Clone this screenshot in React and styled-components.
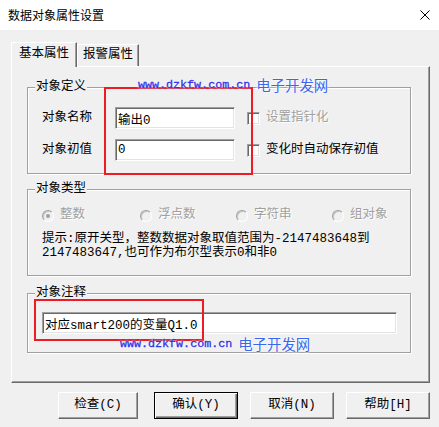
import React from 'react';
import styled, { createGlobalStyle } from 'styled-components';

const Global = createGlobalStyle`
  html, body { margin: 0; padding: 0; background: #f0f0f0; }
  #root { width: 439px; height: 427px; }
`;

const UI = `"Liberation Mono", "Noto Sans CJK SC", monospace`;

const Window = styled.div`
  position: relative;
  width: 439px;
  height: 427px;
  background: #f0f0f0;
  font-family: ${UI};
  font-size: 12.5px;
  color: #000;
  overflow: hidden;
`;

const TitleBar = styled.div`
  height: 30px;
  background: #fff;
  display: flex;
  align-items: center;
  justify-content: space-between;
  padding: 0 9px 0 8px;
  box-sizing: border-box;
`;

const Title = styled.div`
  font-family: "Noto Sans CJK SC", sans-serif;
  font-size: 12px;
  line-height: 14px;
`;

const CloseIcon = styled.svg`
  width: 10px;
  height: 10px;
  margin-top: -1px;
`;

const Body = styled.div`
  padding: 12px 9px 0 11px;
`;

const Tabs = styled.div`
  display: flex;
  align-items: flex-end;
  height: 24px;
  position: relative;
  z-index: 1;
`;

const Tab = styled.div`
  box-sizing: border-box;
  width: ${p => p.$w}px;
  height: ${p => (p.$active ? 25 : 22)}px;
  margin-bottom: ${p => (p.$active ? -1 : 0)}px;
  background: #f0f0f0;
  border-left: 1px solid #fff;
  border-top: 1px solid #fff;
  border-right: 1px solid #696969;
  box-shadow: inset -1px 0 0 #a0a0a0;
  display: flex;
  align-items: center;
  justify-content: center;
  padding-bottom: ${p => (p.$active ? 2 : 0)}px;
  line-height: 15px;
`;

const Panel = styled.div`
  box-sizing: border-box;
  height: 317px;
  border: 1px solid;
  border-color: #fff #696969 #696969 #fff;
  box-shadow: inset -1px -1px 0 #a0a0a0;
  padding: 20px 18px 0 15px;
  display: flex;
  flex-direction: column;
`;

const Group = styled.div`
  position: relative;
  border: 1px solid #a0a0a0;
  box-shadow: 1px 1px 0 #fff, inset 1px 1px 0 #fff;
  margin-top: ${p => p.$mt || 0}px;
  padding: ${p => p.$pad};
`;

const Legend = styled.div`
  position: absolute;
  top: -8px;
  left: 7px;
  padding: 0 1px;
  background: #f0f0f0;
  line-height: 15px;
`;

const FieldRow = styled.div`
  display: flex;
  align-items: center;
  height: 22px;
  & + & { margin-top: 10px; }
`;

const FieldLabel = styled.div`
  width: 73px;
  line-height: 15px;
`;

const TextInput = styled.input`
  box-sizing: border-box;
  width: ${p => p.$w}px;
  height: 22px;
  margin: 0;
  padding: 0 2px;
  font: inherit;
  color: #000;
  background: #fff;
  border: 1px solid;
  border-color: #a0a0a0 #fff #fff #a0a0a0;
  box-shadow: inset 1px 1px 0 #696969, inset -1px -1px 0 #e3e3e3;
  outline: none;
`;

const CheckBox = styled.span`
  box-sizing: border-box;
  width: 13px;
  height: 13px;
  margin-left: 12px;
  background: #fff;
  border: 1px solid;
  border-color: #a0a0a0 #fff #fff #a0a0a0;
  box-shadow: inset 1px 1px 0 #696969, inset -1px -1px 0 #e3e3e3;
`;

const OptionText = styled.span`
  margin-left: ${p => p.$ml || 0}px;
  line-height: 15px;
  color: ${p => (p.$disabled ? '#a0a0a0' : '#000')};
  text-shadow: ${p => (p.$disabled ? '1px 1px 0 #fff' : 'none')};
`;

const RadioRow = styled.div`
  display: grid;
  grid-template-columns: 98px 96px 96px auto;
  height: 14px;
  align-items: center;
`;

const Radio = styled.div`
  display: flex;
  align-items: center;
  gap: 6px;
`;

const RadioDot = styled.span`
  box-sizing: border-box;
  width: 12px;
  height: 12px;
  border-radius: 50%;
  border: 1px solid;
  border-color: #a0a0a0 #fff #fff #a0a0a0;
  background: #f0f0f0;
  box-shadow: inset 1px 1px 0 #c8c8c8;
  display: flex;
  align-items: center;
  justify-content: center;
  &::after {
    content: '';
    width: 4px;
    height: 4px;
    border-radius: 50%;
    background: ${p => (p.$checked ? '#a0a0a0' : 'transparent')};
  }
`;

const Hint = styled.div`
  margin-top: 10px;
  line-height: 14px;
  white-space: pre;
`;

const ButtonRow = styled.div`
  display: flex;
  gap: 12px;
  padding-left: 47px;
  margin-top: 9px;
`;

const Button = styled.button`
  box-sizing: border-box;
  width: ${p => p.$w}px;
  height: 27px;
  margin: 0 ${p => p.$mr || 0}px 0 0;
  padding: 0;
  font: inherit;
  color: #000;
  background: #f0f0f0;
  border: 1px solid;
  border-color: ${p => (p.$default ? '#000' : '#fff #696969 #696969 #fff')};
  box-shadow: ${p =>
    p.$default
      ? 'inset 1px 1px 0 #fff, inset -1px -1px 0 #696969, inset -2px -2px 0 #a0a0a0'
      : 'inset -1px -1px 0 #a0a0a0'};
  line-height: 15px;
`;

const RedBox = styled.div`
  position: absolute;
  left: ${p => p.$x}px;
  top: ${p => p.$y}px;
  width: ${p => p.$w}px;
  height: ${p => p.$h}px;
  box-sizing: border-box;
  border: 2px solid #ed1c24;
  pointer-events: none;
`;

const Watermark = styled.div`
  position: absolute;
  left: ${p => p.$x}px;
  top: ${p => p.$y}px;
  display: flex;
  align-items: center;
  gap: 6px;
  height: 16px;
  pointer-events: none;
`;

const WmUrl = styled.span`
  font-family: "Liberation Mono", monospace;
  font-size: 11.7px;
  line-height: 14px;
  color: #2f2fe6;
  -webkit-text-stroke: 0.3px #2f2fe6;
  text-shadow: 0 0 2px #fff, 0 0 2px #fff;
`;

const WmName = styled.span`
  font-family: "Noto Sans CJK SC", sans-serif;
  font-size: 14.4px;
  line-height: 16px;
  color: #3a66f0;
  text-shadow: 0 0 2px #fff, 0 0 3px #fff;
`;

function Mark({ x, y }) {
  return (
    <Watermark $x={x} $y={y}>
      <WmUrl>www.dzkfw.com.cn</WmUrl>
      <WmName>电子开发网</WmName>
    </Watermark>
  );
}

export default function App() {
  return (
    <>
      <Global />
      <Window>
        <TitleBar>
          <Title>数据对象属性设置</Title>
          <CloseIcon viewBox="0 0 10 10">
            <path d="M0.5 0.5 L9.5 9.5 M9.5 0.5 L0.5 9.5" stroke="#000" strokeWidth="1" fill="none" />
          </CloseIcon>
        </TitleBar>
        <Body>
          <Tabs>
            <Tab $active $w={66}>基本属性</Tab>
            <Tab $w={62}>报警属性</Tab>
          </Tabs>
          <Panel>
            <Group $pad="19px 0 12px 14px">
              <Legend>对象定义</Legend>
              <FieldRow>
                <FieldLabel>对象名称</FieldLabel>
                <TextInput $w={120} defaultValue="输出0" readOnly />
                <CheckBox />
                <OptionText $ml={6} $disabled>设置指针化</OptionText>
              </FieldRow>
              <FieldRow>
                <FieldLabel>对象初值</FieldLabel>
                <TextInput $w={120} defaultValue="0" readOnly />
                <CheckBox />
                <OptionText $ml={6}>变化时自动保存初值</OptionText>
              </FieldRow>
            </Group>
            <Group $mt={15} $pad="18px 0 15px 14px">
              <Legend>对象类型</Legend>
              <RadioRow>
                <Radio><RadioDot $checked /><OptionText $disabled>整数</OptionText></Radio>
                <Radio><RadioDot /><OptionText $disabled>浮点数</OptionText></Radio>
                <Radio><RadioDot /><OptionText $disabled>字符串</OptionText></Radio>
                <Radio><RadioDot /><OptionText $disabled>组对象</OptionText></Radio>
              </RadioRow>
              <Hint>{'提示:原开关型，整数数据对象取值范围为-2147483648到\n2147483647,也可作为布尔型表示0和非0'}</Hint>
            </Group>
            <Group $mt={17} $pad="18px 0 18px 14px">
              <Legend>对象注释</Legend>
              <TextInput $w={355} defaultValue="对应smart200的变量Q1.0" readOnly />
            </Group>
          </Panel>
          <ButtonRow>
            <Button $w={80} $mr={4}>检查(C)</Button>
            <Button $w={84} $default>确认(Y)</Button>
            <Button $w={84}>取消(N)</Button>
            <Button $w={84}>帮助[H]</Button>
          </ButtonRow>
        </Body>
        <RedBox $x={104} $y={87} $w={149} $h={88} />
        <RedBox $x={34} $y={299} $w={170} $h={42} />
        <Mark x={138} y={77} />
        <Mark x={120} y={336} />
      </Window>
    </>
  );
}
